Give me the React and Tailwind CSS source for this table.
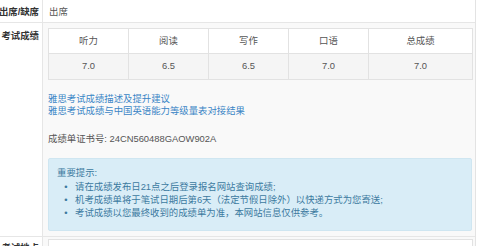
const scores = [
  { name: '听力', value: '7.0', w: 'w-[80px]' },
  { name: '阅读', value: '6.5', w: 'w-[80px]' },
  { name: '写作', value: '6.5', w: 'w-[80px]' },
  { name: '口语', value: '7.0', w: 'w-[80px]' },
  { name: '总成绩', value: '7.0', w: 'flex-1' },
];

const tips = [
  '请在成绩发布日21点之后登录报名网站查询成绩;',
  '机考成绩单将于笔试日期后第6天（法定节假日除外）以快递方式为您寄送;',
  '考试成绩以您最终收到的成绩单为准，本网站信息仅供参考。',
];

export default function App() {
  return (
    <div className="w-[480px] h-[246px] overflow-hidden bg-white text-[9.4px] text-[#555] font-['Liberation_Sans','Noto_Sans_CJK_SC',sans-serif]">
      <div className="w-[476px] border-r border-[#e3e3e3]">
        {/* 出席 */}
        <div className="flex h-[23px] border-b border-[#e6e6e6]">
          <div className="w-[43px] shrink-0 border-r border-[#e6e6e6] flex justify-end overflow-hidden pr-[3px]">
            <span className="whitespace-nowrap font-bold text-[#333] leading-[23px]">出席/缺席</span>
          </div>
          <div className="flex-1 pl-[6px] leading-[23px]">出席</div>
        </div>

        {/* 考试成绩 */}
        <div className="flex h-[213px]">
          <div className="w-[43px] shrink-0 border-r border-[#e6e6e6] flex justify-end overflow-hidden pr-[3px] pt-[6px]">
            <span className="whitespace-nowrap font-bold text-[#333] leading-[13px]">考试成绩</span>
          </div>
          <div className="flex-1 bg-[#f9f9f9] pl-[5px] pr-[2px] pt-[5px]">
            <div className="w-[425px] border border-[#e2e2e2] bg-white">
              <div className="flex h-[25px] border-b border-[#e2e2e2]">
                {scores.map((s, i) => (
                  <div key={s.name} className={`${s.w} flex items-center justify-center ${i < 4 ? 'border-r border-[#e2e2e2]' : ''}`}>
                    {s.name}
                  </div>
                ))}
              </div>
              <div className="flex h-[25px] bg-[#f5f5f5]">
                {scores.map((s, i) => (
                  <div key={s.name} className={`${s.w} flex items-center justify-center ${i < 4 ? 'border-r border-[#e2e2e2]' : ''}`}>
                    {s.value}
                  </div>
                ))}
              </div>
            </div>

            <div className="mt-[13px] leading-[12px] text-[#3a85c6]">
              <div>雅思考试成绩描述及提升建议</div>
              <div>雅思考试成绩与中国英语能力等级量表对接结果</div>
            </div>

            <div className="mt-[16px] leading-[12px]">成绩单证书号: 24CN560488GAOW902A</div>

            <div className="mt-[13px] w-[424px] h-[73px] bg-[#d9edf7] border border-[#cfe6f1] rounded-[2px] text-[#3c7aa0] pl-[8px] pt-[7px] leading-[13px]">
              <div>重要提示:</div>
              <ul className="mt-[1px]">
                {tips.map((t) => (
                  <li key={t} className="flex">
                    <span className="w-[18px] text-center">•</span>
                    <span>{t}</span>
                  </li>
                ))}
              </ul>
            </div>
          </div>
        </div>

        {/* next row */}
        <div className="flex h-[20px] border-t border-[#e6e6e6]">
          <div className="w-[43px] shrink-0 border-r border-[#e6e6e6] flex justify-end overflow-hidden pr-[3px] pt-[4px]">
            <span className="whitespace-nowrap font-bold text-[#333] leading-[13px]">考试地点</span>
          </div>
          <div className="flex-1 bg-[#f9f9f9] pl-[5px] pt-[2px]">
            <div className="w-[425px] h-[20px] border border-[#e2e2e2] bg-white"></div>
          </div>
        </div>
      </div>
    </div>
  );
}
